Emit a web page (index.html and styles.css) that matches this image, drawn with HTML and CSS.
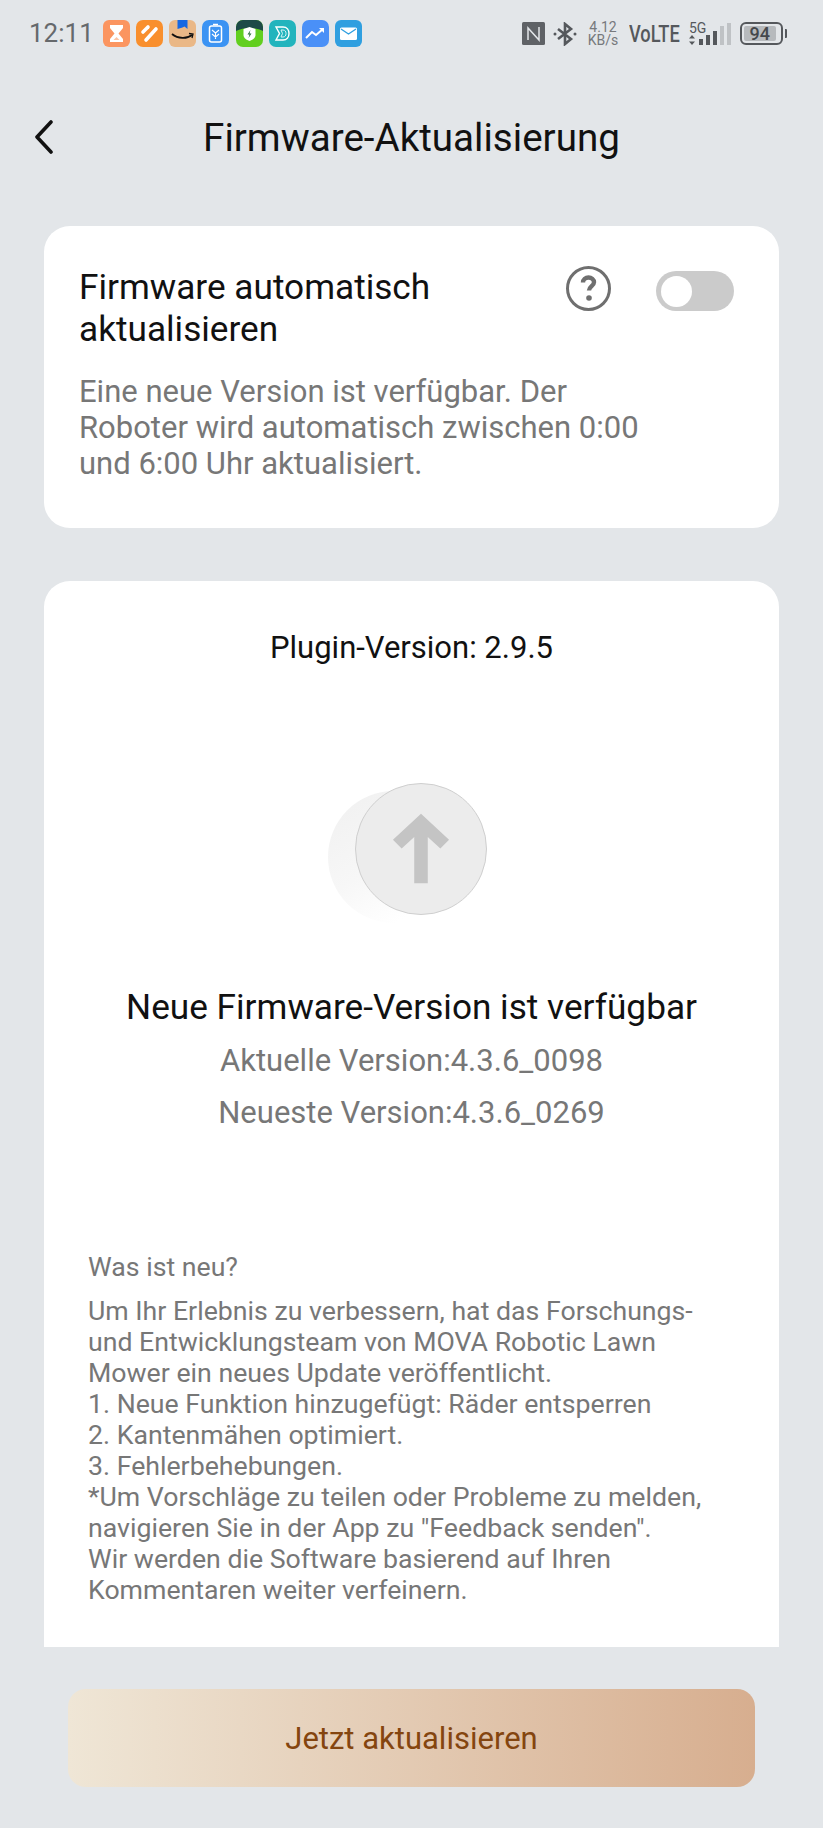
FILE: index.html
```html
<!DOCTYPE html>
<html lang="de">

<head>
    <meta charset="UTF-8">
    <meta name="viewport" content="width=device-width, initial-scale=1.0">
    <title>Firmware-Aktualisierung</title>
    <link rel="stylesheet" href="styles.css">
</head>

<body>
    <div class="app">
        <div class="status">
            <div class="status_left">
                <span class="time">12:11</span>
                <div class="apps">
                    <svg viewBox="0 0 27 27"><rect width="27" height="27" rx="6" fill="#fb9560"/><path d="M7 5h13v3l-4.500 5.500L20 19v3H7v-3l4.500-5.500L7 8z" fill="#fff"/><path d="M10.500 20l3-3 3 3z" fill="#fcc4a4"/></svg>
                    <svg viewBox="0 0 27 27"><rect width="27" height="27" rx="7" fill="#f98f2d"/><path d="M7 12l5-5" stroke="#fff" stroke-width="3.600" stroke-linecap="round"/><path d="M10 20L20 9" stroke="#fff" stroke-width="3.600" stroke-linecap="round"/></svg>
                    <svg viewBox="0 0 27 27"><rect width="27" height="27" rx="6" fill="#eab887"/><path d="M8.500 0h10v9l-3-2.500-2 1-5 1.500z" fill="#1668e3"/><path d="M3 14c6 5 15 5 20 1" fill="none" stroke="#111" stroke-width="1.800"/><path d="M20 13.500l4 .5-1 4" fill="none" stroke="#111" stroke-width="1.300"/></svg>
                    <svg viewBox="0 0 27 27"><rect width="27" height="27" rx="7" fill="#3b93f3"/><rect x="7.500" y="6" width="12" height="16" rx="2" fill="none" stroke="#fff" stroke-width="1.500"/><path d="M11 4.500h5" stroke="#fff" stroke-width="1.500"/><path d="M10 10l3.500 3 3.500-3M10 14l3.500 3 3.500-3M13.500 13v6" fill="none" stroke="#fff" stroke-width="1.100"/></svg>
                    <svg viewBox="0 0 27 27"><rect width="27" height="27" rx="7" fill="#62cf1f"/><path d="M0 7a7 7 0 0 1 7-7h13a7 7 0 0 1 7 7v4c-8-4-19-4-27 0z" fill="#1d4a47"/><path d="M13.500 7l6 2v6c0 3-3 5-6 6-3-1-6-3-6-6V9z" fill="#fff"/><path d="M14.500 10l-3 4.500h2l-1 3.500 3-4.500h-2z" fill="#2c6d3c"/></svg>
                    <svg viewBox="0 0 27 27"><rect width="27" height="27" rx="7" fill="#22b4bd"/><path d="M7 7h7c4 0 6 3 6 6.500S18 20 14 20H7l3.500-6.500z" fill="none" stroke="#fff" stroke-width="1.400"/><path d="M12 10h2c2 0 3 1.500 3 3.500S16 17 14 17h-2l1.500-3.500z" fill="none" stroke="#d5f3f4" stroke-width="1"/></svg>
                    <svg viewBox="0 0 27 27"><rect width="27" height="27" rx="7" fill="#4a90f7"/><path d="M4 18l6-6 4 3 7-6" fill="none" stroke="#fff" stroke-width="2"/><path d="M17 8h5v5z" fill="#fff"/></svg>
                    <svg viewBox="0 0 27 27"><rect width="27" height="27" rx="6" fill="#2f9fe0"/><rect x="5" y="7.500" width="17" height="12.500" rx="1.500" fill="#fff"/><path d="M6 9l7.500 5 7.500-5" fill="none" stroke="#2f9fe0" stroke-width="1.300"/></svg>
                </div>
            </div>
            <div class="status_right">
                <svg class="nfc" viewBox="0 0 23 23"><rect width="23" height="23" rx="1.500" fill="#5f6266"/><path d="M6 18V6l11 12V5" fill="none" stroke="#e3e6e9" stroke-width="1.500"/></svg>
                <svg class="bt" viewBox="0 0 24 24"><path d="M5 7l13 10-6 5V2l6 5L5 17" fill="none" stroke="#55585c" stroke-width="2.600"/><circle cx="2" cy="12" r="1.500" fill="#55585c"/><circle cx="22" cy="12" r="1.500" fill="#55585c"/></svg>
                <div class="speed"><span>4.12</span><span>KB/s</span></div>
                <div class="volte"><span>VoLTE</span></div>
                <div class="net">
                    <span class="net_type">5G</span>
                    <div class="net_row">
                        <svg class="arrows" viewBox="0 0 6 10"><path d="M3 0l3 3.500H0zM3 10L0 6.500h6z" fill="#55585c"/></svg>
                        <div class="bars">
                            <i class="bar1"></i><i class="bar2"></i><i class="bar3"></i><i class="bar4 off"></i><i class="bar5 off"></i>
                        </div>
                    </div>
                </div>
                <div class="battery">
                    <div class="battery_body"><div class="battery_fill">94</div></div>
                    <div class="battery_tip"></div>
                </div>
            </div>
        </div>

        <div class="head">
            <svg class="back" viewBox="0 0 20 34"><path d="M17 2L3 17l14 15" fill="none" stroke="#111" stroke-width="3.600" stroke-linecap="round" stroke-linejoin="round"/></svg>
            <h1>Firmware-Aktualisierung</h1>
        </div>

        <div class="card auto">
            <div class="auto_top">
                <div class="auto_title">Firmware automatisch aktualisieren</div>
                <svg class="help" viewBox="0 0 45 45"><circle cx="22.500" cy="22.500" r="21" fill="none" stroke="#6f6f6f" stroke-width="3"/><path d="M17 16.500c0-3 2.500-5 5.500-5s5.500 2 5.500 4.800c0 3.700-5 4-5 8.200" fill="none" stroke="#6f6f6f" stroke-width="4.400"/><circle cx="23" cy="32" r="2.800" fill="#6f6f6f"/></svg>
                <div class="switch"><div class="knob"></div></div>
            </div>
            <p class="auto_desc">Eine neue Version ist verfügbar. Der Roboter wird automatisch zwischen 0:00 und 6:00 Uhr aktualisiert.</p>
        </div>

        <div class="card main">
            <div class="plugin">Plugin-Version: 2.9.5</div>
            <div class="pic">
                <div class="pic_shadow"></div>
                <div class="pic_circle">
                    <svg viewBox="0 0 60 72"><path d="M30 0l29 27-9 9-13-12v48H23V24L10 36l-9-9z" fill="#c4c4c4"/></svg>
                </div>
            </div>
            <div class="new_title">Neue Firmware-Version ist verfügbar</div>
            <div class="ver">Aktuelle Version:4.3.6_0098</div>
            <div class="ver">Neueste Version:4.3.6_0269</div>
            <div class="notes">
                <div class="notes_head">Was ist neu?</div>
                <div class="notes_text">Um Ihr Erlebnis zu verbessern, hat das Forschungs-<br>und Entwicklungsteam von MOVA Robotic Lawn<br>Mower ein neues Update veröffentlicht.<br>1. Neue Funktion hinzugefügt: Räder entsperren<br>2. Kantenmähen optimiert.<br>3. Fehlerbehebungen.<br>*Um Vorschläge zu teilen oder Probleme zu melden,<br>navigieren Sie in der App zu "Feedback senden".<br>Wir werden die Software basierend auf Ihren<br>Kommentaren weiter verfeinern.</div>
            </div>
        </div>

        <div class="foot">
            <div class="btn">Jetzt aktualisieren</div>
        </div>
    </div>
</body>

</html>
```

FILE: styles.css
```css
* {
    margin: 0;
    padding: 0;
    box-sizing: border-box;
}

body {
    background: #e3e6e9;
    font-family: Roboto, "Liberation Sans", sans-serif;
}

.app {
    width: 823px;
    height: 1828px;
    display: flex;
    flex-direction: column;
    overflow: hidden;
}

/* status bar */
.status {
    height: 70px;
    padding: 20px 36px 0 29px;
    display: flex;
    justify-content: space-between;
    align-items: flex-start;
}

.status_left {
    display: flex;
    align-items: center;
    gap: 9px;
}

.time {
    font-size: 26px;
    line-height: 27px;
    color: #66696c;
}

.apps {
    display: flex;
    gap: 6.200px;
}

.apps svg {
    width: 27px;
    height: 27px;
    display: block;
}

.status_right {
    display: flex;
    align-items: center;
    height: 27px;
    color: #55585c;
}

.nfc {
    width: 23px;
    height: 23px;
}

.bt {
    width: 24px;
    height: 24px;
    margin-left: 8px;
}

.speed {
    width: 30px;
    margin-left: 11px;
    display: flex;
    flex-direction: column;
    align-items: center;
    font-size: 14px;
    line-height: 12.500px;
    color: #77797c;
}

.volte {
    width: 51px;
    margin-left: 11px;
    font-size: 24px;
    font-weight: 500;
    white-space: nowrap;
}

.volte span {
    display: inline-block;
    transform: scaleX(0.76);
    transform-origin: left center;
}

.net {
    width: 42px;
    margin-left: 9px;
    position: relative;
    height: 27px;
}

.net_type {
    position: absolute;
    left: 0;
    top: 1px;
    font-size: 14px;
    line-height: 14px;
}

.net_row {
    position: absolute;
    left: 0;
    bottom: 2px;
    display: flex;
    align-items: flex-end;
    gap: 4px;
}

.arrows {
    width: 6px;
    height: 10px;
}

.bars {
    display: flex;
    align-items: flex-end;
    gap: 3px;
}

.bars i {
    display: block;
    width: 4px;
    background: #55585c;
}

.bar1 { height: 6px; }
.bar2 { height: 10px; }
.bar3 { height: 14px; }
.bar4 { height: 19px; }
.bar5 { height: 22px; }

.bars .off {
    background: #bfc2c5;
}

.battery {
    margin-left: 9px;
    display: flex;
    align-items: center;
    gap: 2px;
}

.battery_body {
    width: 43px;
    height: 23px;
    border: 2px solid #55585c;
    border-radius: 6px;
    padding: 2px;
}

.battery_fill {
    height: 100%;
    width: 90%;
    background: #b7babd;
    border-radius: 2px;
    font-size: 18px;
    line-height: 15px;
    font-weight: 500;
    text-align: center;
    color: #45484c;
}

.battery_tip {
    width: 2px;
    height: 9px;
    background: #55585c;
    border-radius: 0 1px 1px 0;
}

/* header */
.head {
    height: 134px;
    position: relative;
    display: flex;
    align-items: center;
    justify-content: center;
}

.head h1 {
    font-size: 38.600px;
    font-weight: 400;
    color: #111;
}

.back {
    position: absolute;
    left: 34px;
    top: 50%;
    margin-top: -17px;
    width: 20px;
    height: 34px;
}

/* cards */
.card {
    margin: 0 44px;
    background: #fff;
}

.auto {
    margin-top: 22px;
    height: 302px;
    border-radius: 26px;
    padding: 40px 36px 0 35px;
}

.auto_top {
    display: flex;
    align-items: flex-start;
}

.auto_title {
    width: 425px;
    font-size: 35.200px;
    line-height: 42px;
    color: #111;
}

.help {
    width: 45px;
    height: 45px;
    margin-left: 62px;
}

.switch {
    width: 78px;
    height: 40px;
    margin-left: 45px;
    margin-top: 5px;
    border-radius: 20px;
    background: #cbcbcb;
    padding: 4.500px;
}

.knob {
    width: 31px;
    height: 31px;
    border-radius: 50%;
    background: #fff;
}

.auto_desc {
    width: 590px;
    margin-top: 24px;
    font-size: 31px;
    line-height: 36px;
    color: #777;
}

.main {
    margin-top: 53px;
    height: 1066px;
    border-radius: 26px 26px 0 0;
    padding-top: 50px;
    text-align: center;
}

.plugin {
    font-size: 31px;
    line-height: 34px;
    color: #111;
}

.pic {
    width: 160px;
    height: 150px;
    margin: 118px auto 0;
    position: relative;
    left: -4px;
}

.pic_shadow {
    position: absolute;
    left: 0;
    top: 8px;
    width: 132px;
    height: 132px;
    border-radius: 50%;
    background: linear-gradient(150deg, #f0f0f0, #f7f7f7 50%, #fff 82%);
}

.pic_circle {
    position: absolute;
    left: 27px;
    top: 0;
    width: 132px;
    height: 132px;
    border-radius: 50%;
    background: #ececec;
    border: 1px solid #cfcfcf;
    display: flex;
    align-items: center;
    justify-content: center;
}

.pic_circle svg {
    width: 58px;
    height: 71px;
    margin-top: -2px;
}

.new_title {
    margin-top: 53px;
    font-size: 35.200px;
    line-height: 42px;
    color: #111;
}

.ver {
    margin-top: 12px;
    font-size: 31px;
    line-height: 42px;
    color: #777;
}

.ver + .ver {
    margin-top: 10px;
}

.notes {
    margin-top: 118px;
    padding-left: 44px;
    text-align: left;
    color: #777;
}

.notes_head {
    font-size: 26.700px;
    line-height: 30px;
}

.notes_text {
    margin-top: 14px;
    font-size: 26.700px;
    line-height: 31px;
}

/* bottom button */
.foot {
    padding: 42px 68px 0 68px;
}

.btn {
    height: 98px;
    border-radius: 18px;
    background: linear-gradient(90deg, #efe6d6, #d7ae8f);
    display: flex;
    align-items: center;
    justify-content: center;
    font-size: 31px;
    color: #84450f;
}
```
